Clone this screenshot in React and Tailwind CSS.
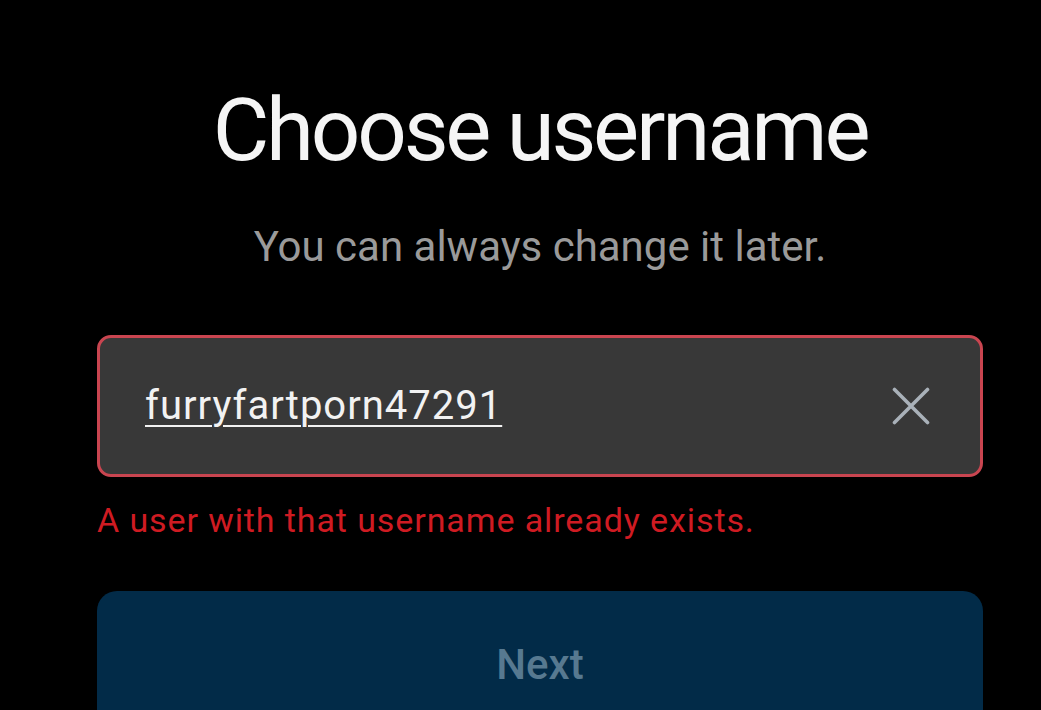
export default function App() {
  return (
    <div className="min-h-[710px] h-[710px] overflow-hidden bg-black pl-[97px] pr-[58px] font-['Roboto',sans-serif]">
      <div className="flex flex-col items-center pt-[83px]">
        <h1 className="text-[87px] leading-[94px] font-normal text-[#f5f5f5] tracking-[-3.2px]">
          Choose username
        </h1>
        <p className="mt-[45px] text-[42px] leading-[50px] text-[#9a9a9a]">
          You can always change it later.
        </p>
      </div>

      <div className="mt-[63px] flex h-[142px] items-center justify-between rounded-[14px] border-[3px] border-[#c94550] bg-[#383838] pl-[45px] pr-[50px]">
        <span className="text-[40px] leading-[48px] tracking-[1px] text-[#f2f2f2] underline decoration-[2px] underline-offset-[6px]">
          furryfartporn47291
        </span>
        <svg width="38" height="38" viewBox="0 0 38 38" fill="none" aria-hidden="true">
          <path d="M2.5 2.5L35.5 35.5M35.5 2.5L2.5 35.5" stroke="#a9b1b9" strokeWidth="3.6" strokeLinecap="round" />
        </svg>
      </div>

      <p className="mt-[22px] text-[34px] leading-[42px] tracking-[0.9px] text-[#cf1b22]">
        A user with that username already exists.
      </p>

      <button className="mt-[50px] flex h-[160px] w-full items-start justify-center rounded-[20px] bg-[#022b48] pt-[49px]">
        <span className="text-[42px] leading-[50px] font-medium text-[#577990]">Next</span>
      </button>
    </div>
  );
}
